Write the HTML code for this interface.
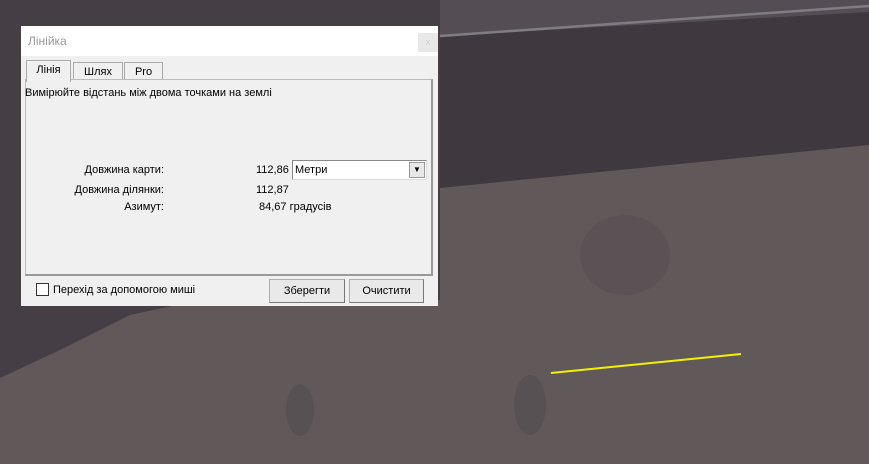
<!DOCTYPE html>
<html><head><meta charset="utf-8"><style>
body{margin:0;width:869px;height:464px;overflow:hidden;position:relative;font-family:"Liberation Sans",Arial,sans-serif;font-size:11px;color:#000}
.bg{position:absolute;left:0;top:0}
.dlg{position:absolute;left:21px;top:26px;width:417px;height:280px;background:#f0f0f0}
.title{position:absolute;left:0;top:0;width:417px;height:30px;background:#fff;color:#999;font-size:12px}
.title span{position:absolute;left:7px;top:8px}
.x{position:absolute;left:397px;top:7px;width:20px;height:19px;background:#e8e8e8;color:#ccc;font-size:9px;text-align:center;line-height:19px}
.tab{position:absolute;top:36px;height:18px;border:1px solid #aaa;border-bottom:none;background:#f0f0f0;text-align:center;line-height:18px;font-size:11px}
.panel{position:absolute;left:4px;top:53px;width:405px;height:194px;border:1px solid #bbb;border-right:2px solid #999;border-bottom:2px solid #999;background:#f0f0f0}
.t{position:absolute;white-space:nowrap}
.btn{position:absolute;top:253px;height:22px;border:1px solid #adadad;border-right-color:#777;border-bottom-color:#777;background:#e9e9e9;text-align:center;line-height:22px}
</style></head><body>
<svg class="bg" width="869" height="464">
<rect width="869" height="464" fill="#605859"/>
<polygon points="0,0 869,0 869,12 440,36 0,36" fill="#554d54"/>
<polygon points="440,36 869,12 869,145 440,188" fill="#3f383f"/>
<polygon points="0,0 440,0 440,300 300,306 200,300 130,315 60,350 0,378" fill="#463e45"/>
<line x1="440" y1="36" x2="869" y2="6" stroke="#807c84" stroke-width="2.5"/>
<ellipse cx="625" cy="255" rx="45" ry="40" fill="#564f52" opacity=".6"/>
<ellipse cx="300" cy="410" rx="14" ry="26" fill="#544d50" opacity=".6"/>
<ellipse cx="530" cy="405" rx="16" ry="30" fill="#544d50" opacity=".6"/>
<line x1="551" y1="373" x2="741" y2="354" stroke="#f4f000" stroke-width="2"/>
</svg>
<div class="dlg">
<div class="title"><span>Лінійка</span><div class="x">x</div></div>
<div class="tab" style="left:5px;top:34px;width:43px;height:21px;z-index:2;border-bottom:none">Лінія</div>
<div class="tab" style="left:52px;width:48px">Шлях</div>
<div class="tab" style="left:103px;width:37px">Pro</div>
<div class="panel"></div>
<div class="t" style="left:4px;top:61px">Вимірюйте відстань між двома точками на землі</div>
<div class="t" style="right:274px;top:138px">Довжина карти:</div>
<div class="t" style="left:235px;top:138px">112,86</div>
<div style="position:absolute;left:271px;top:134px;width:133px;height:18px;background:#fff;border:1px solid #888;border-right-color:#ddd;border-bottom-color:#ddd"><span class="t" style="left:2px;top:3px">Метри</span><div style="position:absolute;right:1px;top:1px;width:14px;height:14px;background:#e8e8e8;border:1px solid #999;text-align:center;font-size:8px;line-height:14px">▼</div></div>
<div class="t" style="right:274px;top:158px">Довжина ділянки:</div>
<div class="t" style="left:235px;top:158px">112,87</div>
<div class="t" style="right:274px;top:175px">Азимут:</div>
<div class="t" style="left:238px;top:175px">84,67 градусів</div>
<div style="position:absolute;left:15px;top:257px;width:11px;height:11px;border:1px solid #333;background:#fff"></div>
<div class="t" style="left:32px;top:258px">Перехід за допомогою миші</div>
<div class="btn" style="left:248px;width:74px">Зберегти</div>
<div class="btn" style="left:328px;width:73px">Очистити</div>
</div>
</body></html>
